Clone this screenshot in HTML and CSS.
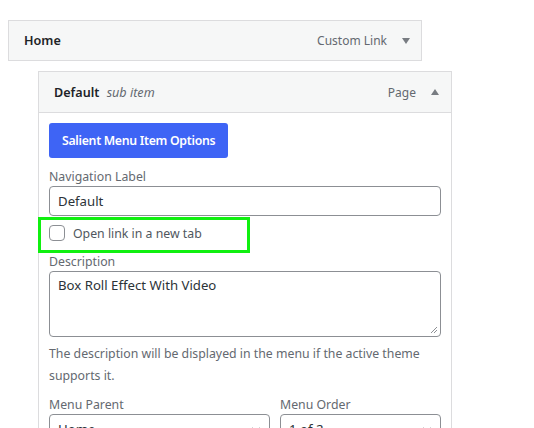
FILE: index.html
```html
<!DOCTYPE html>
<html>
<head>
<meta charset="utf-8">
<link rel="stylesheet" href="styles.css">
</head>
<body>
<div class="menu">
  <div class="item item-top">
    <div class="bar">
      <span class="title">Home</span>
      <span class="controls"><span class="type">Custom Link</span><span class="arrow down"></span></span>
    </div>
  </div>
  <div class="item item-sub">
    <div class="bar">
      <span class="title">Default <em class="sub">sub item</em></span>
      <span class="controls"><span class="type">Page</span><span class="arrow up"></span></span>
    </div>
    <div class="settings">
      <button class="btn">Salient Menu Item Options</button>
      <label class="field">
        <span class="lbl">Navigation Label</span>
        <span class="input">Default</span>
      </label>
      <div class="check-row">
        <span class="checkbox"></span>
        <span class="check-text">Open link in a new tab</span>
        <span class="highlight"></span>
      </div>
      <label class="field field-desc">
        <span class="lbl">Description</span>
        <span class="textarea">Box Roll Effect With Video<svg class="grip" width="8" height="8" viewBox="0 0 8 8"><path d="M7 1 L1 7 M7 4 L4 7" stroke="#8c8f94" stroke-width="1"/></svg></span>
      </label>
      <p class="help">The description will be displayed in the menu if the active theme supports it.</p>
      <div class="two">
        <label class="field">
          <span class="lbl">Menu Parent</span>
          <span class="select">Home<svg class="chev" width="10" height="6" viewBox="0 0 10 6"><path d="M1 1 L5 5 L9 1" fill="none" stroke="#50575e" stroke-width="1.4"/></svg></span>
        </label>
        <label class="field">
          <span class="lbl">Menu Order</span>
          <span class="select">1 of 2<svg class="chev" width="10" height="6" viewBox="0 0 10 6"><path d="M1 1 L5 5 L9 1" fill="none" stroke="#50575e" stroke-width="1.4"/></svg></span>
        </label>
      </div>
    </div>
  </div>
</div>
</body>
</html>
```
FILE: styles.css
```css
* { box-sizing: border-box; }
html, body { margin: 0; padding: 0; background: #fff; }
body {
  font-family: "Noto Sans", "Open Sans", sans-serif;
  font-size: 12.3px;
  color: #1d2327;
  overflow: hidden;
  height: 428px;
}
.menu { padding: 20px 0 0 8px; }
.item { width: 414px; }
.item-sub { margin-left: 30px; margin-top: 10px; border: 1px solid #dcdcde; border-top: none; }
.bar {
  height: 41px;
  background: #f6f7f7;
  border: 1px solid #dcdcde;
  display: flex;
  align-items: center;
  justify-content: space-between;
  padding: 0 11px 0 15px;
}
.item-sub .bar { margin: 0 -1px; height: 42px; padding-right: 12px; }
.title { font-weight: 600; font-size: 12.6px; }
.sub { font-weight: 400; font-style: italic; color: #646970; margin-left: 4px; }
.controls { display: flex; align-items: center; gap: 15px; color: #646970; font-size: 12px; }
.arrow { width: 0; height: 0; border-left: 4.5px solid transparent; border-right: 4.5px solid transparent; }
.arrow.down { border-top: 6px solid #787c82; }
.arrow.up { border-bottom: 6px solid #787c82; }
.settings { padding: 10px 10px 0; background: #fff; }
.btn {
  display: block;
  height: 35px;
  padding: 0 13px;
  background: #3e64f5;
  color: #fff;
  border: none;
  border-radius: 3px;
  font-family: inherit;
  font-size: 12.3px;
  font-weight: 600;
  letter-spacing: -0.3px;
}
.field { display: flex; flex-direction: column; }
.lbl { color: #646970; font-size: 12.3px; line-height: 18px; margin-top: 10px; }
.input, .textarea, .select {
  display: block;
  border: 1px solid #8c8f94;
  border-radius: 4px;
  background: #fff;
  color: #2c3338;
  font-size: 13.2px;
  padding: 0 8px;
}
.input { height: 30px; line-height: 28px; }
.check-row {
  position: relative;
  display: flex;
  align-items: center;
  gap: 8px;
  height: 34px;
}
.checkbox { width: 16px; height: 16px; border: 1px solid #8c8f94; border-radius: 4px; background: #fff; }
.check-text { color: #50575e; font-size: 12.3px; }
.highlight {
  position: absolute;
  left: -11px;
  top: 1px;
  width: 212px;
  height: 36px;
  border: 3px solid #10f010;
}
.field-desc .lbl { margin-top: 3px; }
.textarea { position: relative; height: 66px; padding: 3px 8px; line-height: 20px; }
.grip { position: absolute; right: 2px; bottom: 2px; }
.help { margin: 6px 0 0; color: #646970; font-size: 12.3px; line-height: 22px; }
.two { display: grid; grid-template-columns: 221px 161px; gap: 10px; }
.two .lbl { margin-top: 9px; }
.select { position: relative; height: 30px; line-height: 28px; }
.chev { position: absolute; right: 8px; top: 12px; }
```
